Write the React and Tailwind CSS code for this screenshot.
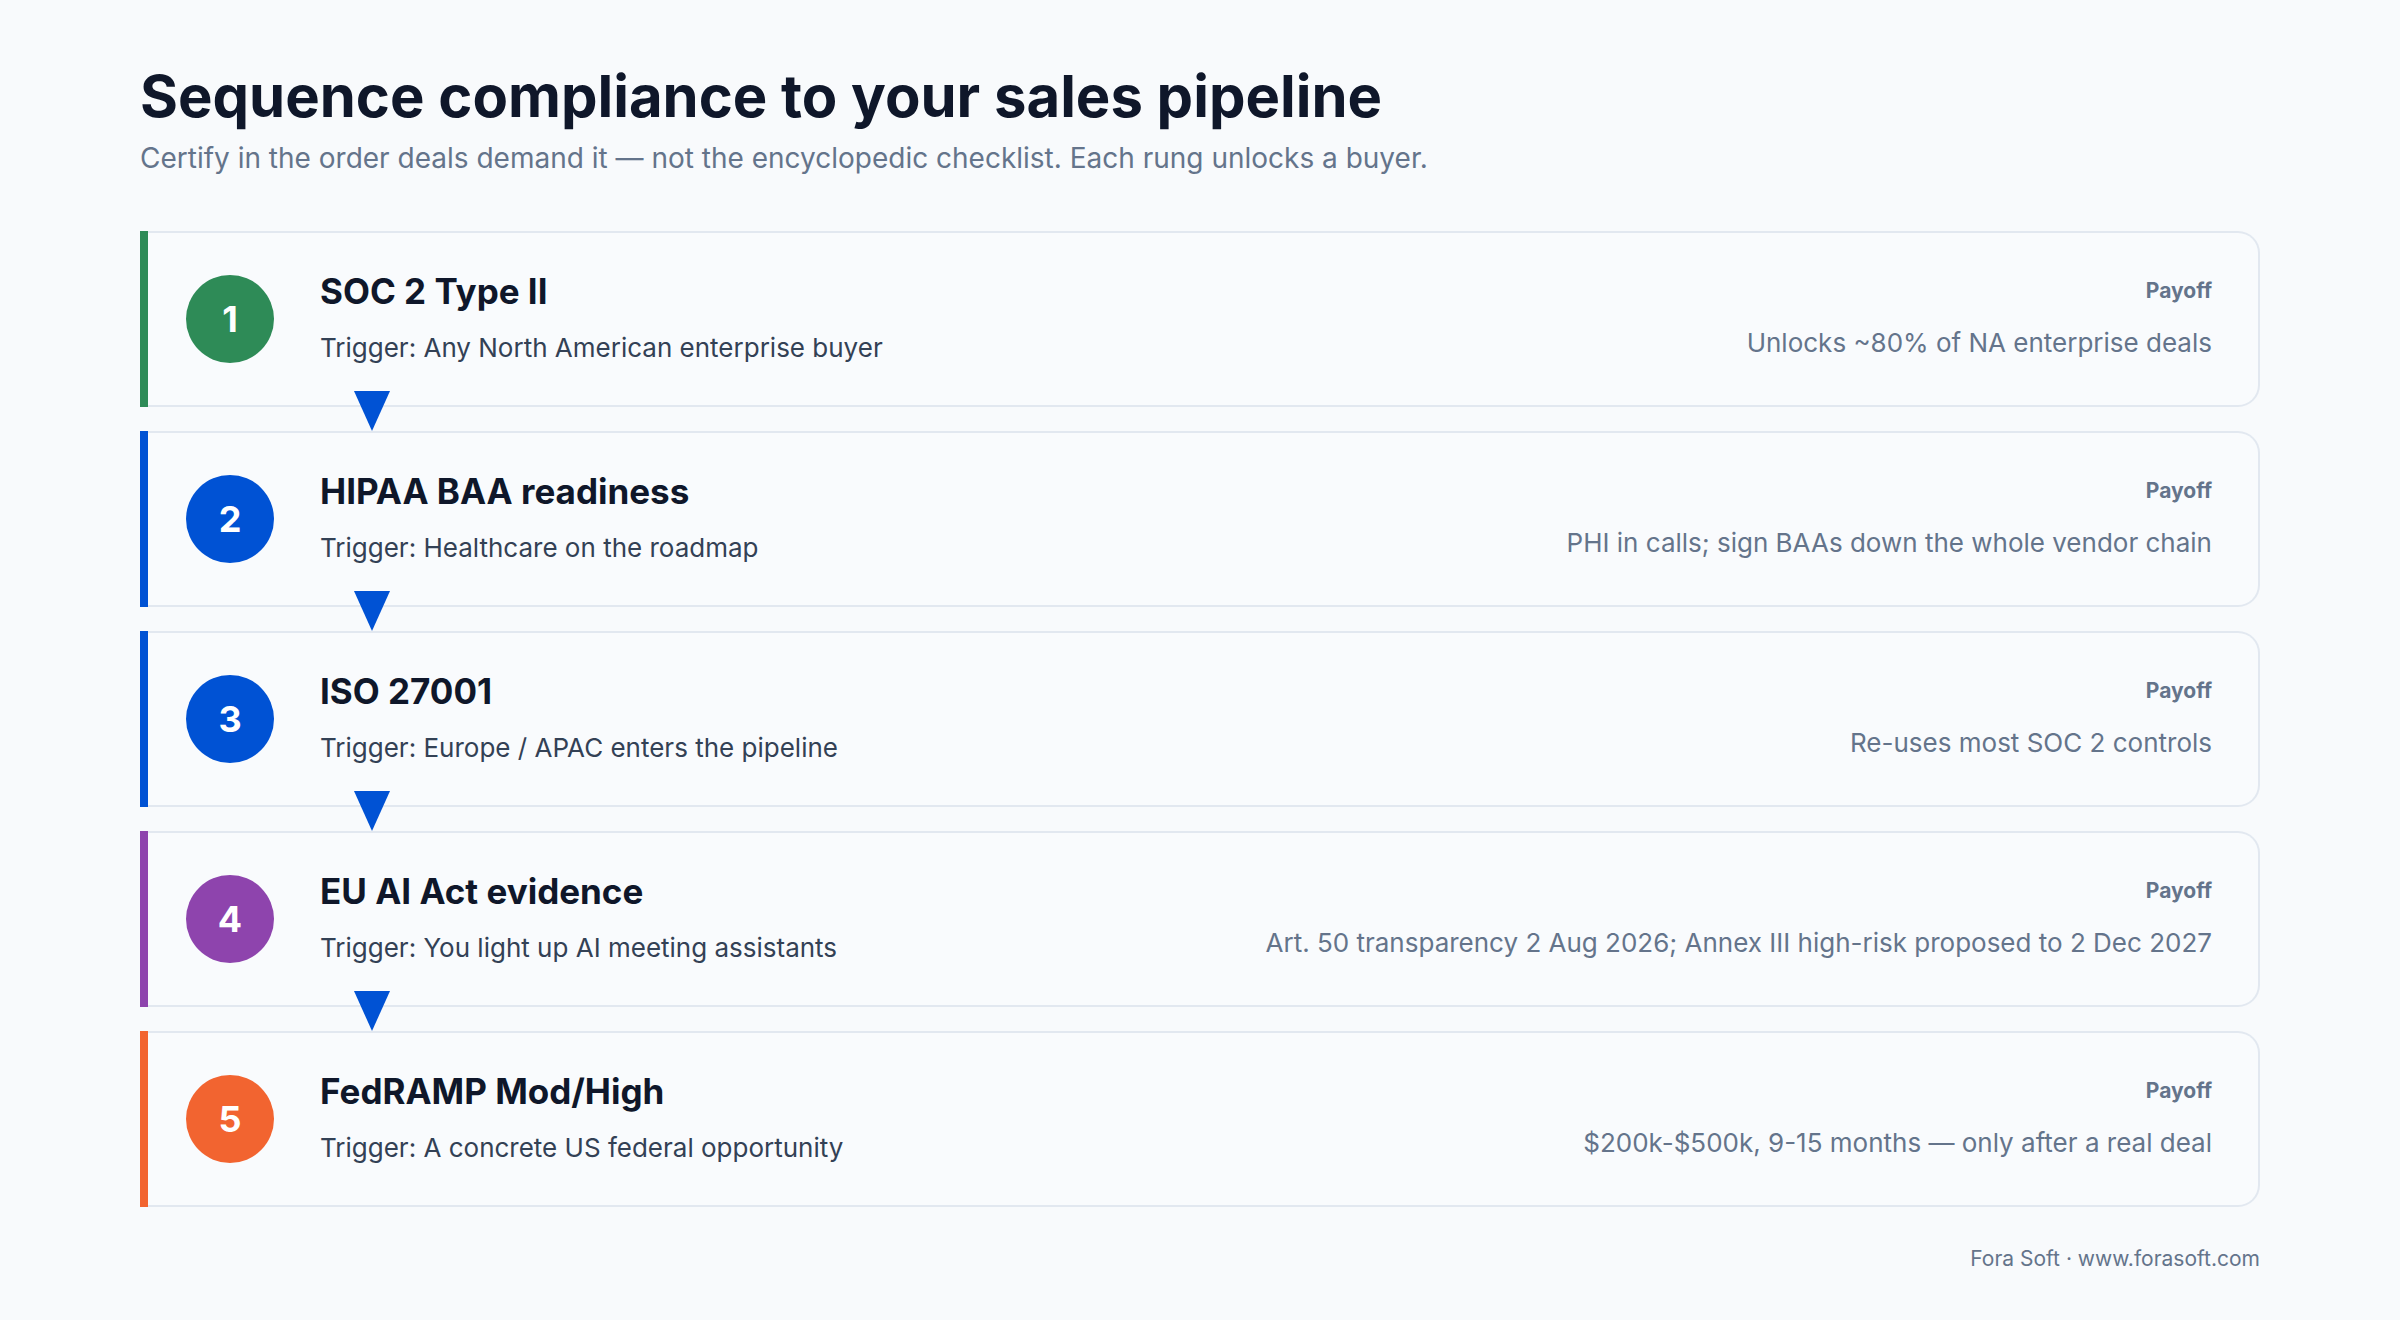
const rungs = [
  { n: 1, title: 'SOC 2 Type II', trigger: 'Trigger: Any North American enterprise buyer', payoff: 'Unlocks ~80% of NA enterprise deals', bar: 'bg-[#2e8b57]', dot: 'bg-[#2e8b57]' },
  { n: 2, title: 'HIPAA BAA readiness', trigger: 'Trigger: Healthcare on the roadmap', payoff: 'PHI in calls; sign BAAs down the whole vendor chain', bar: 'bg-[#0052d4]', dot: 'bg-[#0052d4]' },
  { n: 3, title: 'ISO 27001', trigger: 'Trigger: Europe / APAC enters the pipeline', payoff: 'Re-uses most SOC 2 controls', bar: 'bg-[#0052d4]', dot: 'bg-[#0052d4]' },
  { n: 4, title: 'EU AI Act evidence', trigger: 'Trigger: You light up AI meeting assistants', payoff: 'Art. 50 transparency 2 Aug 2026; Annex III high-risk proposed to 2 Dec 2027', bar: 'bg-[#8e44ad]', dot: 'bg-[#8e44ad]' },
  { n: 5, title: 'FedRAMP Mod/High', trigger: 'Trigger: A concrete US federal opportunity', payoff: '$200k-$500k, 9-15 months — only after a real deal', bar: 'bg-[#f26430]', dot: 'bg-[#f26430]' },
];

function Rung({ r, last }) {
  return (
    <div className="relative flex h-[176px]">
      <div className={`w-[8px] shrink-0 ${r.bar}`} />
      <div className="flex flex-1 items-center rounded-r-[22px] border-2 border-l-0 border-[#e2e8f0] bg-[#f9fbfd] pl-[38px] pr-[46px]">
        <div className={`flex h-[88px] w-[88px] shrink-0 items-center justify-center rounded-full text-[36px] font-bold text-white ${r.dot}`}>
          {r.n}
        </div>
        <div className="ml-[46px] flex-1">
          <div className="text-[35px] font-bold leading-tight text-[#0f172a]">{r.title}</div>
          <div className="mt-[14px] text-[26px] text-[#334155]">{r.trigger}</div>
        </div>
        <div className="text-right">
          <div className="text-[21px] font-bold text-[#64748b]">Payoff</div>
          <div className="mt-[16px] text-[26px] text-[#64748b]">{r.payoff}</div>
        </div>
      </div>
      {!last && (
        <svg className="absolute left-[214px] top-[160px] z-10" width="36" height="40" viewBox="0 0 36 40">
          <polygon points="0,0 36,0 18,40" fill="#0052d4" />
        </svg>
      )}
    </div>
  );
}

export default function App() {
  return (
    <div className="min-h-[1320px] bg-[#f8fafc] px-[140px] pt-[60px]" style={{ fontFamily: 'Inter, "Noto Sans", sans-serif' }}>
      <h1 className="text-[58px] font-bold leading-tight text-[#0f172a]">Sequence compliance to your sales pipeline</h1>
      <p className="mt-[4px] text-[28px] text-[#64748b]">Certify in the order deals demand it — not the encyclopedic checklist. Each rung unlocks a buyer.</p>
      <div className="mt-[52px] flex flex-col gap-[24px]">
        {rungs.map((r, i) => (
          <Rung key={r.n} r={r} last={i === rungs.length - 1} />
        ))}
      </div>
      <div className="mt-[36px] text-right text-[21px] text-[#64748b]">Fora Soft · www.forasoft.com</div>
    </div>
  );
}
